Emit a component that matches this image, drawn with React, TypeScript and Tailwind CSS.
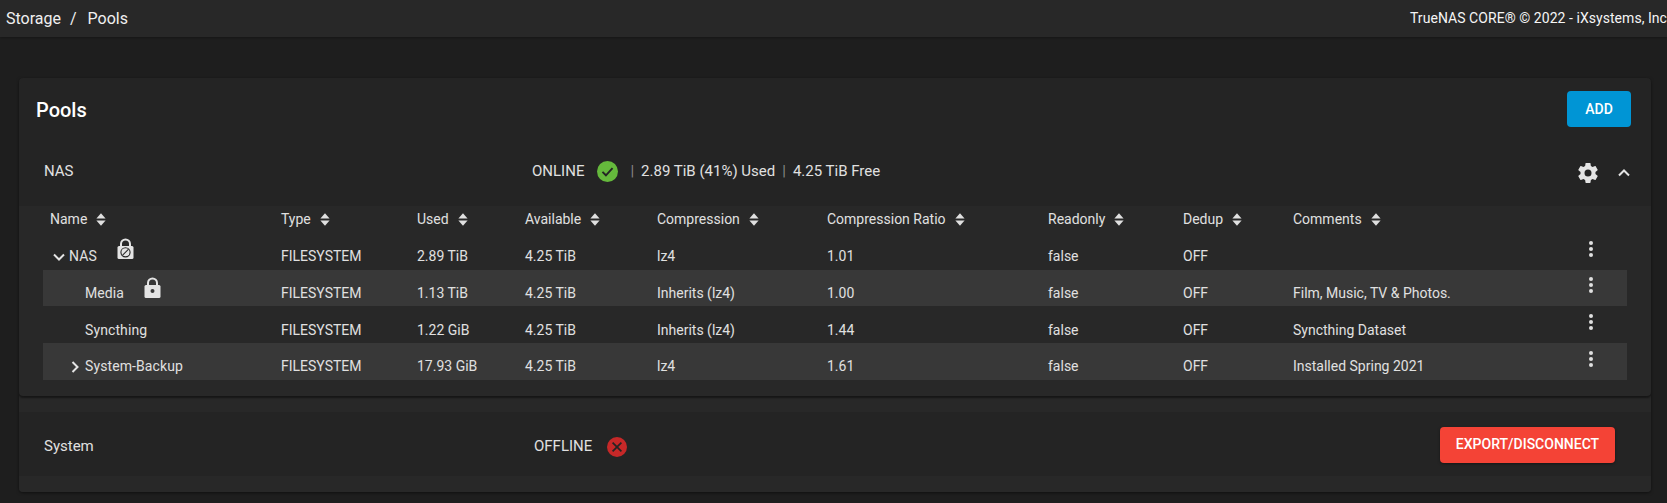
import React from "react";

const GRID =
  "grid grid-cols-[231px_136px_108px_132px_170px_221px_135px_110px_287px_22px] pl-[7px]";

const columns = [
  "Name",
  "Type",
  "Used",
  "Available",
  "Compression",
  "Compression Ratio",
  "Readonly",
  "Dedup",
  "Comments",
];

type Row = {
  name: string;
  level: number;
  chevron?: "down" | "right";
  lock?: "slash" | "dot";
  used: string;
  compression: string;
  ratio: string;
  comments: string;
};

const rows: Row[] = [
  { name: "NAS", level: 0, chevron: "down", lock: "slash", used: "2.89 TiB", compression: "lz4", ratio: "1.01", comments: "" },
  { name: "Media", level: 1, lock: "dot", used: "1.13 TiB", compression: "Inherits (lz4)", ratio: "1.00", comments: "Film, Music, TV & Photos." },
  { name: "Syncthing", level: 1, used: "1.22 GiB", compression: "Inherits (lz4)", ratio: "1.44", comments: "Syncthing Dataset" },
  { name: "System-Backup", level: 1, chevron: "right", used: "17.93 GiB", compression: "lz4", ratio: "1.61", comments: "Installed Spring 2021" },
];

const SortIcon = () => (
  <svg className="ml-[9px] shrink-0" width="10" height="13" viewBox="0 0 10 13" fill="#e0e0e0">
    <path d="M5 0.3 9.6 5.4H0.4Z" />
    <path d="M5 12.7 9.6 7.6H0.4Z" />
  </svg>
);

const LockIcon = ({ kind, bg }: { kind: "slash" | "dot"; bg: string }) => (
  <svg
    className={`ml-5 shrink-0 ${kind === "slash" ? "-translate-y-[3px]" : ""}`}
    width="17"
    height="21"
    viewBox="0 0 17 21"
  >
    <path d="M4 9V6a4.5 4.5 0 0 1 9 0v3" fill="none" stroke="#e4e4e4" strokeWidth="2" />
    <rect x="0.5" y="8" width="16" height="13" rx="1.5" fill="#e4e4e4" />
    {kind === "dot" ? (
      <circle cx="8.5" cy="14" r="2" fill={bg} />
    ) : (
      <g fill="none" stroke={bg} strokeWidth="1.1">
        <circle cx="8.5" cy="14.3" r="4.6" />
        <path d="M5.4 17.4 11.6 11.2" />
      </g>
    )}
  </svg>
);

const Chevron = ({ dir }: { dir: "down" | "right" | "up" }) => {
  const d = dir === "down" ? "M2 4.5 7 9.5 12 4.5" : dir === "up" ? "M2 9.5 7 4.5 12 9.5" : "M4.5 2 9.5 7 4.5 12";
  return (
    <svg width="14" height="14" viewBox="0 0 14 14" fill="none" stroke="#e4e4e4" strokeWidth="2">
      <path d={d} />
    </svg>
  );
};

const Kebab = () => (
  <svg className="mb-[5px]" width="6" height="18" viewBox="0 0 6 18" fill="#e0e0e0">
    <circle cx="3" cy="3" r="2" />
    <circle cx="3" cy="9" r="2" />
    <circle cx="3" cy="15" r="2" />
  </svg>
);

const Cell = ({ children }: { children?: React.ReactNode }) => (
  <div className="pt-[11px] whitespace-nowrap">{children}</div>
);

export default function App() {
  return (
    <div className="h-[503px] overflow-hidden bg-[#1e1e1e] text-[14px] text-[#e0e0e0] font-['Roboto',sans-serif]">
      {/* Top bar */}
      <header className="flex h-[37px] items-center justify-between bg-[#282828] pl-[6px] shadow-[0_1px_2px_rgba(0,0,0,0.25)]">
        <div className="flex items-center text-[16px] text-[#f0f0f0]">
          <span>Storage</span>
          <span className="ml-[9px] mr-[11px]">/</span>
          <span>Pools</span>
        </div>
        <span className="whitespace-nowrap tracking-[0.05px] text-[#f5f5f5]">TrueNAS CORE® © 2022 - iXsystems, Inc</span>
      </header>

      <main className="w-[1651px] px-[19px] pt-[41px]">
        <div className="w-[1632px] overflow-hidden rounded-[4px] bg-[#242424] shadow-[0_1px_3px_rgba(0,0,0,0.5)]">
          <div className="flex h-[62px] items-center justify-between pl-[17px] pr-[20px]">
            <h1 className="pt-[2px] text-[20px] font-medium text-white">Pools</h1>
            <button className="h-9 w-16 rounded-[4px] bg-[#0095d5] text-[14px] font-medium text-white">ADD</button>
          </div>

          {/* NAS pool */}
          <div className="flex h-[66px] items-center pl-[25px] pb-1 text-[15px]">
            <span className="w-[488px]">NAS</span>
            <span>ONLINE</span>
            <svg className="ml-[13px]" width="21" height="21" viewBox="0 0 20 20">
              <circle cx="10" cy="10" r="10" fill="#65b93c" />
              <path d="M5.2 10.4 8.5 13.6 14.8 6.8" fill="none" stroke="#242424" strokeWidth="1.8" />
            </svg>
            <span className="ml-[12px] text-[#888]">|</span>
            <span className="ml-[7px]">2.89 TiB (41%) Used</span>
            <span className="ml-[7px] text-[#888]">|</span>
            <span className="ml-[7px]">4.25 TiB Free</span>
            <div className="ml-auto mr-5 flex translate-y-[2px] items-center gap-[17px]">
              <svg width="24" height="24" viewBox="0 0 24 24" fill="#e4e4e4">
                <path d="M12,15.5A3.5,3.5 0 0,1 8.5,12A3.5,3.5 0 0,1 12,8.5A3.5,3.5 0 0,1 15.5,12A3.5,3.5 0 0,1 12,15.5M19.43,12.97C19.47,12.65 19.5,12.33 19.5,12C19.5,11.67 19.47,11.34 19.43,11L21.54,9.37C21.73,9.22 21.78,8.95 21.66,8.73L19.66,5.27C19.54,5.05 19.27,4.96 19.05,5.05L16.56,6.05C16.04,5.66 15.5,5.32 14.87,5.07L14.5,2.42C14.46,2.18 14.25,2 14,2H10C9.75,2 9.54,2.18 9.5,2.42L9.13,5.07C8.5,5.32 7.96,5.66 7.44,6.05L4.95,5.05C4.73,4.96 4.46,5.05 4.34,5.27L2.34,8.73C2.21,8.95 2.27,9.22 2.46,9.37L4.57,11C4.53,11.34 4.5,11.67 4.5,12C4.5,12.33 4.53,12.65 4.57,12.97L2.46,14.63C2.27,14.78 2.21,15.05 2.34,15.27L4.34,18.73C4.46,18.95 4.73,19.03 4.95,18.95L7.44,17.94C7.96,18.34 8.5,18.68 9.13,18.93L9.5,21.58C9.54,21.82 9.75,22 10,22H14C14.25,22 14.46,21.82 14.5,21.58L14.87,18.93C15.5,18.67 16.04,18.34 16.56,17.94L19.05,18.95C19.27,19.03 19.54,18.95 19.66,18.73L21.66,15.27C21.78,15.05 21.73,14.78 21.54,14.63L19.43,12.97Z" />
              </svg>
              <Chevron dir="up" />
            </div>
          </div>

          {/* Datasets table */}
          <div className="relative z-10 rounded-b-[4px] bg-[#282828] px-[24px] pb-4 shadow-[0_2px_2px_rgba(0,0,0,0.45)]">
            <div className={`${GRID} h-[27px] items-center`}>
              {columns.map((c) => (
                <div key={c} className="flex items-center whitespace-nowrap">
                  {c}
                  <SortIcon />
                </div>
              ))}
            </div>
            {rows.map((r, i) => (
              <div
                key={r.name}
                className={`${GRID} h-[36.67px] items-center ${i % 2 === 1 ? "bg-[#383838]" : ""}`}
              >
                <div className={`flex items-center whitespace-nowrap ${r.level === 1 ? "pl-4" : ""}`}>
                  <span className="flex w-[19px] shrink-0 justify-center pr-[2px] pt-[11px]">
                    {r.chevron && <Chevron dir={r.chevron} />}
                  </span>
                  <span className="pt-[11px] tracking-[0.1px]">{r.name}</span>
                  {r.lock && <LockIcon kind={r.lock} bg={i % 2 === 1 ? "#383838" : "#282828"} />}
                </div>
                <Cell>FILESYSTEM</Cell>
                <Cell>{r.used}</Cell>
                <Cell>4.25 TiB</Cell>
                <Cell>{r.compression}</Cell>
                <Cell>{r.ratio}</Cell>
                <Cell>false</Cell>
                <Cell>OFF</Cell>
                <Cell>{r.comments}</Cell>
                <div className="flex justify-center">
                  <Kebab />
                </div>
              </div>
            ))}
          </div>

          {/* System pool */}
          <div className="bg-[#282828] py-4">
            <div className="flex h-16 items-center bg-[#242424] pl-[25px] pt-[6px] text-[15px]">
              <span className="w-[490px]">System</span>
              <span>OFFLINE</span>
              <svg className="ml-[15px]" width="20" height="20" viewBox="0 0 20 20">
                <circle cx="10" cy="10" r="10" fill="#c62828" />
                <path d="M5.6 5.6 14.4 14.4M14.4 5.6 5.6 14.4" fill="none" stroke="#242424" strokeWidth="1.7" />
              </svg>
              <button className="ml-auto mr-9 mb-1 h-9 w-[175px] rounded-[4px] bg-[#f44336] text-[14px] font-medium text-white shadow-[0_1px_3px_rgba(0,0,0,0.4)]">
                EXPORT/DISCONNECT
              </button>
            </div>
          </div>
        </div>
      </main>
    </div>
  );
}
